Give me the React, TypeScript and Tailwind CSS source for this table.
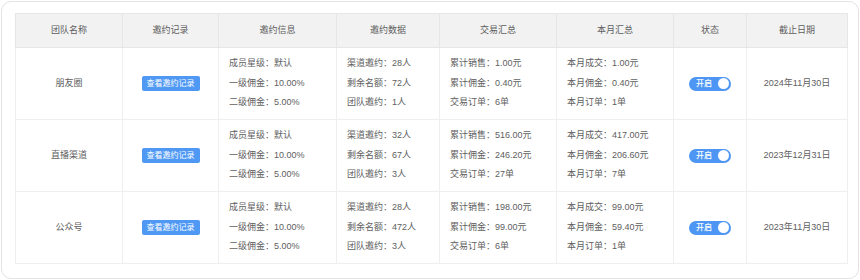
const rows = [
  {
    name: '朋友圈',
    info: ['成员星级：默认', '一级佣金：10.00%', '二级佣金：5.00%'],
    invite: ['渠道邀约：28人', '剩余名额：72人', '团队邀约：1人'],
    trade: ['累计销售：1.00元', '累计佣金：0.40元', '交易订单：6单'],
    month: ['本月成交：1.00元', '本月佣金：0.40元', '本月订单：1单'],
    date: '2024年11月30日',
  },
  {
    name: '直播渠道',
    info: ['成员星级：默认', '一级佣金：10.00%', '二级佣金：5.00%'],
    invite: ['渠道邀约：32人', '剩余名额：67人', '团队邀约：3人'],
    trade: ['累计销售：516.00元', '累计佣金：246.20元', '交易订单：27单'],
    month: ['本月成交：417.00元', '本月佣金：206.60元', '本月订单：7单'],
    date: '2023年12月31日',
  },
  {
    name: '公众号',
    info: ['成员星级：默认', '一级佣金：10.00%', '二级佣金：5.00%'],
    invite: ['渠道邀约：28人', '剩余名额：472人', '团队邀约：3人'],
    trade: ['累计销售：198.00元', '累计佣金：99.00元', '交易订单：6单'],
    month: ['本月成交：99.00元', '本月佣金：59.40元', '本月订单：1单'],
    date: '2023年11月30日',
  },
];

const headers = ['团队名称', '邀约记录', '邀约信息', '邀约数据', '交易汇总', '本月汇总', '状态', '截止日期'];
const widths = [107, 96, 118, 103, 117, 117, 73, 101];

const Lines = ({ items }: { items: string[] }) => (
  <div className="flex flex-col pl-[10px] leading-[19.5px]">
    {items.map((t) => (
      <span key={t}>{t}</span>
    ))}
  </div>
);

const Toggle = () => (
  <div className="mx-auto flex h-[14px] w-[42px] items-center justify-between rounded-full bg-[#4d96f3] pl-[7px] pr-[2px]">
    <span className="text-[8px] font-medium leading-none text-white">开启</span>
    <span className="h-[11px] w-[11px] rounded-full bg-white" />
  </div>
);

export default function App() {
  return (
    <div className="h-[280px] w-[860px] bg-white p-px" style={{ fontFamily: '"Liberation Sans", "Noto Sans CJK SC", sans-serif' }}>
      <div className="h-[278px] w-[858px] rounded-[10px] border border-[#e3e3e3] bg-white pl-[13px] pt-[11px]">
        <table className="table-fixed border-collapse border border-[#ebebeb] text-[9px] text-[#606060]">
          <colgroup>
            {widths.map((w, i) => (
              <col key={i} style={{ width: w }} />
            ))}
          </colgroup>
          <thead>
            <tr className="h-[34px] bg-[#f2f2f2]">
              {headers.map((h) => (
                <th key={h} className="border border-[#e6e6e6] text-center font-normal text-[#5e5e5e]">
                  {h}
                </th>
              ))}
            </tr>
          </thead>
          <tbody>
            {rows.map((r) => (
              <tr key={r.name} className="h-[72px]">
                <td className="border border-[#efefef] text-center">{r.name}</td>
                <td className="border border-[#efefef] text-center">
                  <span className="inline-flex h-[15px] w-[58px] items-center justify-center rounded-[2px] bg-[#4f98f4] text-[8px] text-white">
                    查看邀约记录
                  </span>
                </td>
                <td className="border border-[#efefef]">
                  <Lines items={r.info} />
                </td>
                <td className="border border-[#efefef]">
                  <Lines items={r.invite} />
                </td>
                <td className="border border-[#efefef]">
                  <Lines items={r.trade} />
                </td>
                <td className="border border-[#efefef]">
                  <Lines items={r.month} />
                </td>
                <td className="border border-[#efefef]">
                  <Toggle />
                </td>
                <td className="border border-[#efefef] text-center">{r.date}</td>
              </tr>
            ))}
          </tbody>
        </table>
      </div>
    </div>
  );
}
